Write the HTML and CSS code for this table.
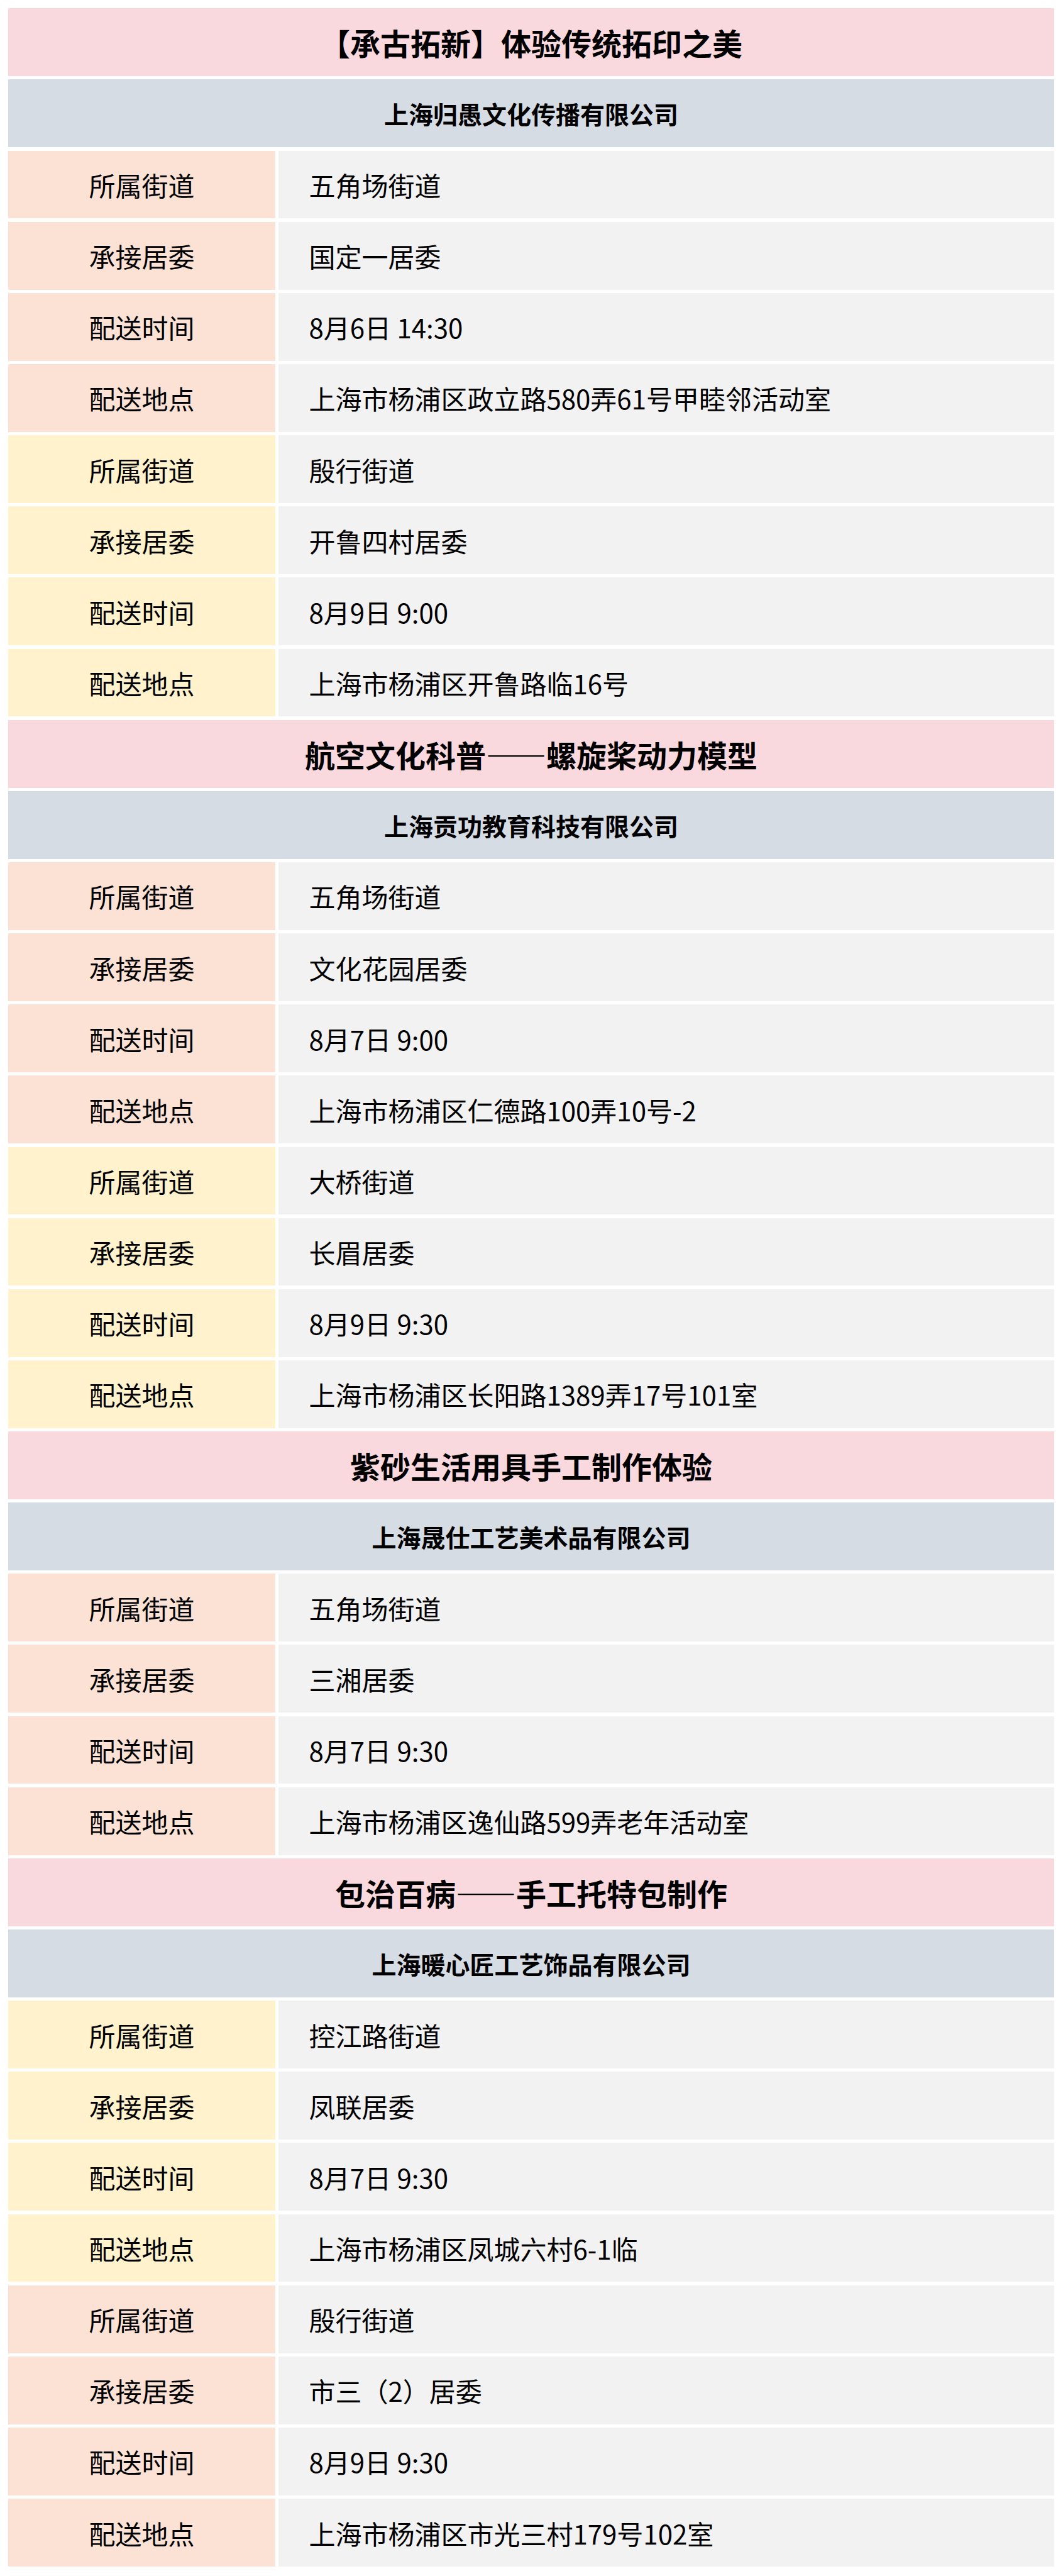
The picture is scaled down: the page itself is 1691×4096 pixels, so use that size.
FILE: index.html
```html
<!DOCTYPE html>
<html lang="zh-CN">
<head>
<meta charset="utf-8">
<title>配送安排</title>
<link rel="stylesheet" href="styles.css">
</head>
<body>
<div class="sheet">
  <div class="title">【承古拓新】体验传统拓印之美</div>
  <div class="company">上海归愚文化传播有限公司</div>
  <div class="label peach">所属街道</div><div class="value">五角场街道</div>
  <div class="label peach">承接居委</div><div class="value">国定一居委</div>
  <div class="label peach">配送时间</div><div class="value">8月6日 14:30</div>
  <div class="label peach">配送地点</div><div class="value">上海市杨浦区政立路580弄61号甲睦邻活动室</div>
  <div class="label yellow">所属街道</div><div class="value">殷行街道</div>
  <div class="label yellow">承接居委</div><div class="value">开鲁四村居委</div>
  <div class="label yellow">配送时间</div><div class="value">8月9日 9:00</div>
  <div class="label yellow">配送地点</div><div class="value">上海市杨浦区开鲁路临16号</div>

  <div class="title">航空文化科普——螺旋桨动力模型</div>
  <div class="company">上海贡功教育科技有限公司</div>
  <div class="label peach">所属街道</div><div class="value">五角场街道</div>
  <div class="label peach">承接居委</div><div class="value">文化花园居委</div>
  <div class="label peach">配送时间</div><div class="value">8月7日 9:00</div>
  <div class="label peach">配送地点</div><div class="value">上海市杨浦区仁德路100弄10号-2</div>
  <div class="label yellow">所属街道</div><div class="value">大桥街道</div>
  <div class="label yellow">承接居委</div><div class="value">长眉居委</div>
  <div class="label yellow">配送时间</div><div class="value">8月9日 9:30</div>
  <div class="label yellow">配送地点</div><div class="value">上海市杨浦区长阳路1389弄17号101室</div>

  <div class="title">紫砂生活用具手工制作体验</div>
  <div class="company">上海晟仕工艺美术品有限公司</div>
  <div class="label peach">所属街道</div><div class="value">五角场街道</div>
  <div class="label peach">承接居委</div><div class="value">三湘居委</div>
  <div class="label peach">配送时间</div><div class="value">8月7日 9:30</div>
  <div class="label peach">配送地点</div><div class="value">上海市杨浦区逸仙路599弄老年活动室</div>

  <div class="title">包治百病——手工托特包制作</div>
  <div class="company">上海暖心匠工艺饰品有限公司</div>
  <div class="label yellow">所属街道</div><div class="value">控江路街道</div>
  <div class="label yellow">承接居委</div><div class="value">凤联居委</div>
  <div class="label yellow">配送时间</div><div class="value">8月7日 9:30</div>
  <div class="label yellow">配送地点</div><div class="value">上海市杨浦区凤城六村6-1临</div>
  <div class="label peach">所属街道</div><div class="value">殷行街道</div>
  <div class="label peach">承接居委</div><div class="value">市三（2）居委</div>
  <div class="label peach">配送时间</div><div class="value">8月9日 9:30</div>
  <div class="label peach">配送地点</div><div class="value">上海市杨浦区市光三村179号102室</div>
</div>
</body>
</html>
```

FILE: styles.css
```css
html, body {
  margin: 0;
  padding: 0;
  background: #ffffff;
}

body {
  padding: 13.26px 0 0 13.26px;
  font-family: "Noto Sans CJK SC", "Noto Sans", sans-serif;
  color: #000000;
}

.sheet {
  display: grid;
  grid-template-columns: 424.3px 1234.1px;
  grid-auto-rows: 107.85px;
  gap: 5.3px;
  width: 1663.7px;
}

.title,
.company {
  grid-column: 1 / -1;
  display: flex;
  align-items: center;
  justify-content: center;
  font-weight: 700;
}

.title {
  background: #f9d9de;
  font-size: 48px;
}

.company {
  background: #d6dce4;
  font-size: 39px;
}

.label,
.value {
  display: flex;
  align-items: center;
  font-size: 42px;
  white-space: nowrap;
}

.label {
  justify-content: center;
}

.peach {
  background: #fbe2d5;
}

.yellow {
  background: #fff2cc;
}

.value {
  background: #f2f2f2;
  padding-left: 48.6px;
}
```
